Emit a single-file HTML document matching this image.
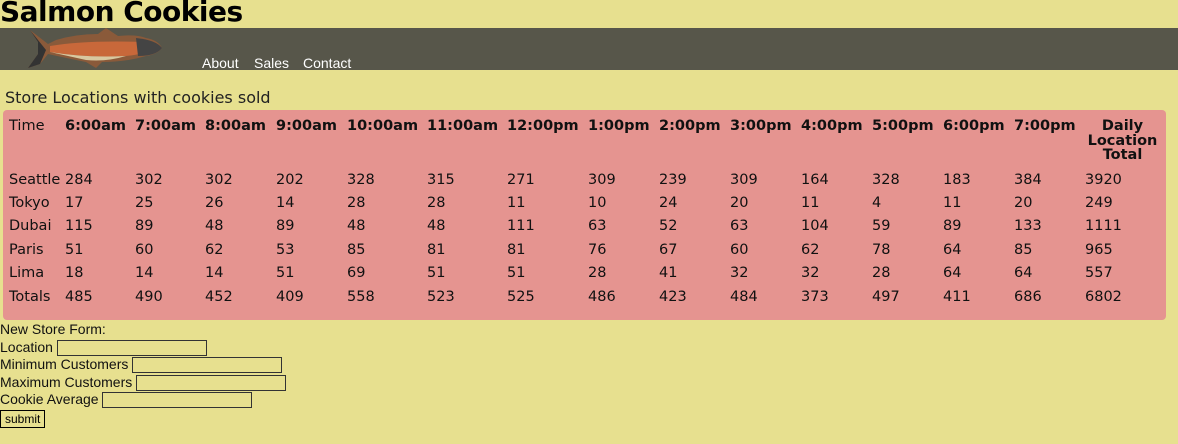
<!DOCTYPE html>
<html><head><style>
body{margin:0;background:#e7e08f;width:1178px;height:444px;overflow:hidden;font-family:"Liberation Sans",Arial,sans-serif;position:relative}
h1{position:absolute;left:0;top:-5px;margin:0;font:bold 28px "DejaVu Sans",sans-serif;color:#000;letter-spacing:-0.5px}
.nav{position:absolute;left:0;top:28px;width:1178px;height:42px;background:#57564a}
.nav a{position:absolute;top:27px;color:#fff;font-size:14px;text-decoration:none}
h2{position:absolute;left:5px;top:88px;margin:0;font:normal 16px "DejaVu Sans",sans-serif;color:#222}
.tb{position:absolute;left:3px;top:110px;width:1163px;height:210px;background:#e59490;border-radius:4px}
table{position:absolute;left:3px;top:6px;border-collapse:collapse;table-layout:fixed;font:14.5px "DejaVu Sans",Verdana,sans-serif;color:#111}
td,th{padding:0 0 0 3px;text-align:left;white-space:nowrap;overflow:visible}
th{vertical-align:top;padding-top:3px;height:49px;font-weight:bold;line-height:14.5px}
th.f{font-weight:normal}
td{height:23.4px}
.form{position:absolute;left:0;top:321px;font-size:14px;color:#111;line-height:17.5px}
.form input{width:150px;height:16px;box-sizing:border-box;border:1px solid #333;background:#e7e08f;padding:0;margin:0;vertical-align:middle}
button{font-size:12px;border:1px solid #000;background:#e7e08f;padding:0 4px;height:18px;margin-top:1px}
</style></head><body>
<h1>Salmon Cookies</h1>
<div class="nav">
<svg style="position:absolute;left:26px;top:0" width="140" height="42" viewBox="0 0 140 42">
<path d="M4 2 L12 14 L12 26 L2 40 L14 36 L22 26 Q40 30 60 34 L70 40 L76 34 Q100 34 120 28 Q132 26 136 20 Q132 12 120 10 Q110 6 92 8 L80 0 L72 6 Q50 6 30 12 L22 16 Z" fill="#8a5a3a"/>
<path d="M24 18 Q60 12 118 14 Q128 16 132 20 Q120 26 100 28 Q60 30 24 24 Z" fill="#c8683a"/>
<path d="M24 24 Q60 30 100 28 Q80 34 60 32 Z" fill="#d8c8a0"/>
<path d="M4 2 L12 14 L12 26 L2 40 L14 36 L20 22 Z" fill="#333"/>
<path d="M110 10 Q130 12 136 20 Q130 28 112 28 Z" fill="#444"/>
</svg>
<a style="left:202px">About</a><a style="left:254px">Sales</a><a style="left:303px">Contact</a>
</div>
<h2>Store Locations with cookies sold</h2>
<div class="tb"><table>
<colgroup><col style="width:56px"><col style="width:70px"><col style="width:70px"><col style="width:71px"><col style="width:71px"><col style="width:80px"><col style="width:80px"><col style="width:81px"><col style="width:71px"><col style="width:71px"><col style="width:71px"><col style="width:71px"><col style="width:71px"><col style="width:71px"><col style="width:71px"><col style="width:78px"></colgroup>
<tr><th class="f">Time</th><th>6:00am</th><th>7:00am</th><th>8:00am</th><th>9:00am</th><th>10:00am</th><th>11:00am</th><th>12:00pm</th><th>1:00pm</th><th>2:00pm</th><th>3:00pm</th><th>4:00pm</th><th>5:00pm</th><th>6:00pm</th><th>7:00pm</th><th style="text-align:center">Daily<br>Location<br>Total</th></tr>
<tr><td>Seattle</td><td>284</td><td>302</td><td>302</td><td>202</td><td>328</td><td>315</td><td>271</td><td>309</td><td>239</td><td>309</td><td>164</td><td>328</td><td>183</td><td>384</td><td>3920</td></tr>
<tr><td>Tokyo</td><td>17</td><td>25</td><td>26</td><td>14</td><td>28</td><td>28</td><td>11</td><td>10</td><td>24</td><td>20</td><td>11</td><td>4</td><td>11</td><td>20</td><td>249</td></tr>
<tr><td>Dubai</td><td>115</td><td>89</td><td>48</td><td>89</td><td>48</td><td>48</td><td>111</td><td>63</td><td>52</td><td>63</td><td>104</td><td>59</td><td>89</td><td>133</td><td>1111</td></tr>
<tr><td>Paris</td><td>51</td><td>60</td><td>62</td><td>53</td><td>85</td><td>81</td><td>81</td><td>76</td><td>67</td><td>60</td><td>62</td><td>78</td><td>64</td><td>85</td><td>965</td></tr>
<tr><td>Lima</td><td>18</td><td>14</td><td>14</td><td>51</td><td>69</td><td>51</td><td>51</td><td>28</td><td>41</td><td>32</td><td>32</td><td>28</td><td>64</td><td>64</td><td>557</td></tr>
<tr><td>Totals</td><td>485</td><td>490</td><td>452</td><td>409</td><td>558</td><td>523</td><td>525</td><td>486</td><td>423</td><td>484</td><td>373</td><td>497</td><td>411</td><td>686</td><td>6802</td></tr>
</table></div>
<div class="form">
New Store Form:<br>
Location <input><br>
Minimum Customers <input><br>
Maximum Customers <input><br>
Cookie Average <input><br>
<button>submit</button>
</div>
</body></html>
